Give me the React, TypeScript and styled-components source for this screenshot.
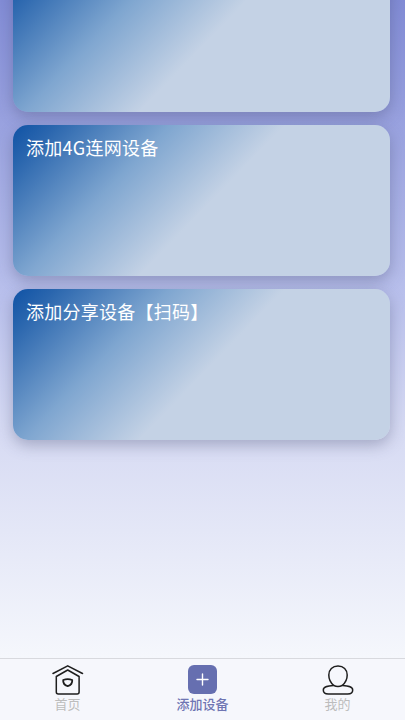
import React from 'react';
import styled, { createGlobalStyle } from 'styled-components';

const GlobalStyle = createGlobalStyle`
  html, body, #root {
    margin: 0;
    height: 100%;
  }
  body {
    font-family: "Noto Sans CJK SC", "Noto Sans", sans-serif;
    overflow: hidden;
  }
`;

const Page = styled.div`
  display: flex;
  flex-direction: column;
  height: 720px;
  width: 405px;
  background: #f6f7fc;
`;

const Content = styled.main`
  flex: 1;
  min-height: 0;
  overflow: hidden;
  background: linear-gradient(180deg, #828cd6 0%, #b9c0ec 45%, #d6daf3 65%, #f5f7fc 100%);
`;

const CardList = styled.div`
  display: flex;
  flex-direction: column;
  gap: 13px;
  margin-top: -39px;
  padding: 0 15px 0 13px;
`;

const Card = styled.div`
  height: 151px;
  box-sizing: border-box;
  padding: 8px 13px;
  border-radius: 15px;
  background: linear-gradient(134deg, #0f52a5 0%, #2a66ae 8%, #7fa6d0 30%, #c4d2e5 52%, #c4d2e5 100%);
  box-shadow: 0 5px 15px rgba(70, 75, 110, 0.36);
  color: #ffffff;
  font-size: 18px;
  line-height: 28px;
  letter-spacing: 0.25px;
`;

const TabBar = styled.nav`
  display: grid;
  grid-template-columns: repeat(3, 1fr);
  height: 61px;
  border-top: 1px solid #d8d9de;
  background: #f6f7fc;
`;

const Tab = styled.div`
  display: flex;
  flex-direction: column;
  align-items: center;
  padding-top: 6px;
`;

const TabIcon = styled.svg`
  display: block;
  width: 32px;
  height: 32px;
`;

const TabLabel = styled.span<{ $active?: boolean }>`
  font-size: 13px;
  line-height: 16px;
  margin-top: -1px;
  font-weight: ${(p) => (p.$active ? 500 : 400)};
  color: ${(p) => (p.$active ? '#6f75b3' : '#bdbdbd')};
`;

const AddBadge = styled.div`
  display: flex;
  align-items: center;
  justify-content: center;
  width: 29px;
  height: 29px;
  margin-bottom: 3px;
  border-radius: 6px;
  background: #666fb0;
`;

const HomeIcon = () => (
  <TabIcon viewBox="0 0 32 32" fill="none" stroke="#1e1e1e" strokeWidth="1.5" strokeLinecap="round" strokeLinejoin="round">
    <path d="M1 8.500 15.700 .8 30.500 8.500" />
    <path d="M15.700 5 4.300 11.500V27a2 2 0 0 0 2 2h18.800a2 2 0 0 0 2-2V11.500Z" />
    <path d="M11.200 15c3-1.200 6-1.200 9 0 .3 3-1.500 5.200-4.500 6.200-3-1-4.800-3.200-4.500-6.200Z" strokeWidth="1.8" />
  </TabIcon>
);

const PlusIcon = () => (
  <svg width="13" height="13" viewBox="0 0 13 13" stroke="#fff" strokeWidth="1.4" strokeLinecap="round">
    <path d="M6.500 1v11M1 6.500h11" />
  </svg>
);

const UserIcon = () => (
  <TabIcon viewBox="0 0 32 32" fill="none" stroke="#1e1e1e" strokeWidth="1.5" strokeLinejoin="round">
    <path d="M11.800 20.500C8.800 18 6.800 14 6.800 10 6.800 4.500 10.500 1 16 1s9.200 3.500 9.200 9c0 4-2 8-5 10.500" />
    <path d="M11.800 20.500C7 20.800 1.300 21 1.300 25c0 2.500 2.200 4 5 4h19.400c2.800 0 5-1.500 5-4 0-4-5.700-4.200-10.500-4.500-2.500 1.200-6 1.200-8.400 0Z" />
  </TabIcon>
);

const cards = ['', '添加4G连网设备', '添加分享设备【扫码】'];

const App: React.FunctionComponent = () => (
  <Page>
    <GlobalStyle />
    <Content>
      <CardList>
        {cards.map((title, i) => (
          <Card key={i}>{title}</Card>
        ))}
      </CardList>
    </Content>
    <TabBar>
      <Tab>
        <HomeIcon />
        <TabLabel>首页</TabLabel>
      </Tab>
      <Tab>
        <AddBadge>
          <PlusIcon />
        </AddBadge>
        <TabLabel $active>添加设备</TabLabel>
      </Tab>
      <Tab>
        <UserIcon />
        <TabLabel>我的</TabLabel>
      </Tab>
    </TabBar>
  </Page>
);

export default App;
